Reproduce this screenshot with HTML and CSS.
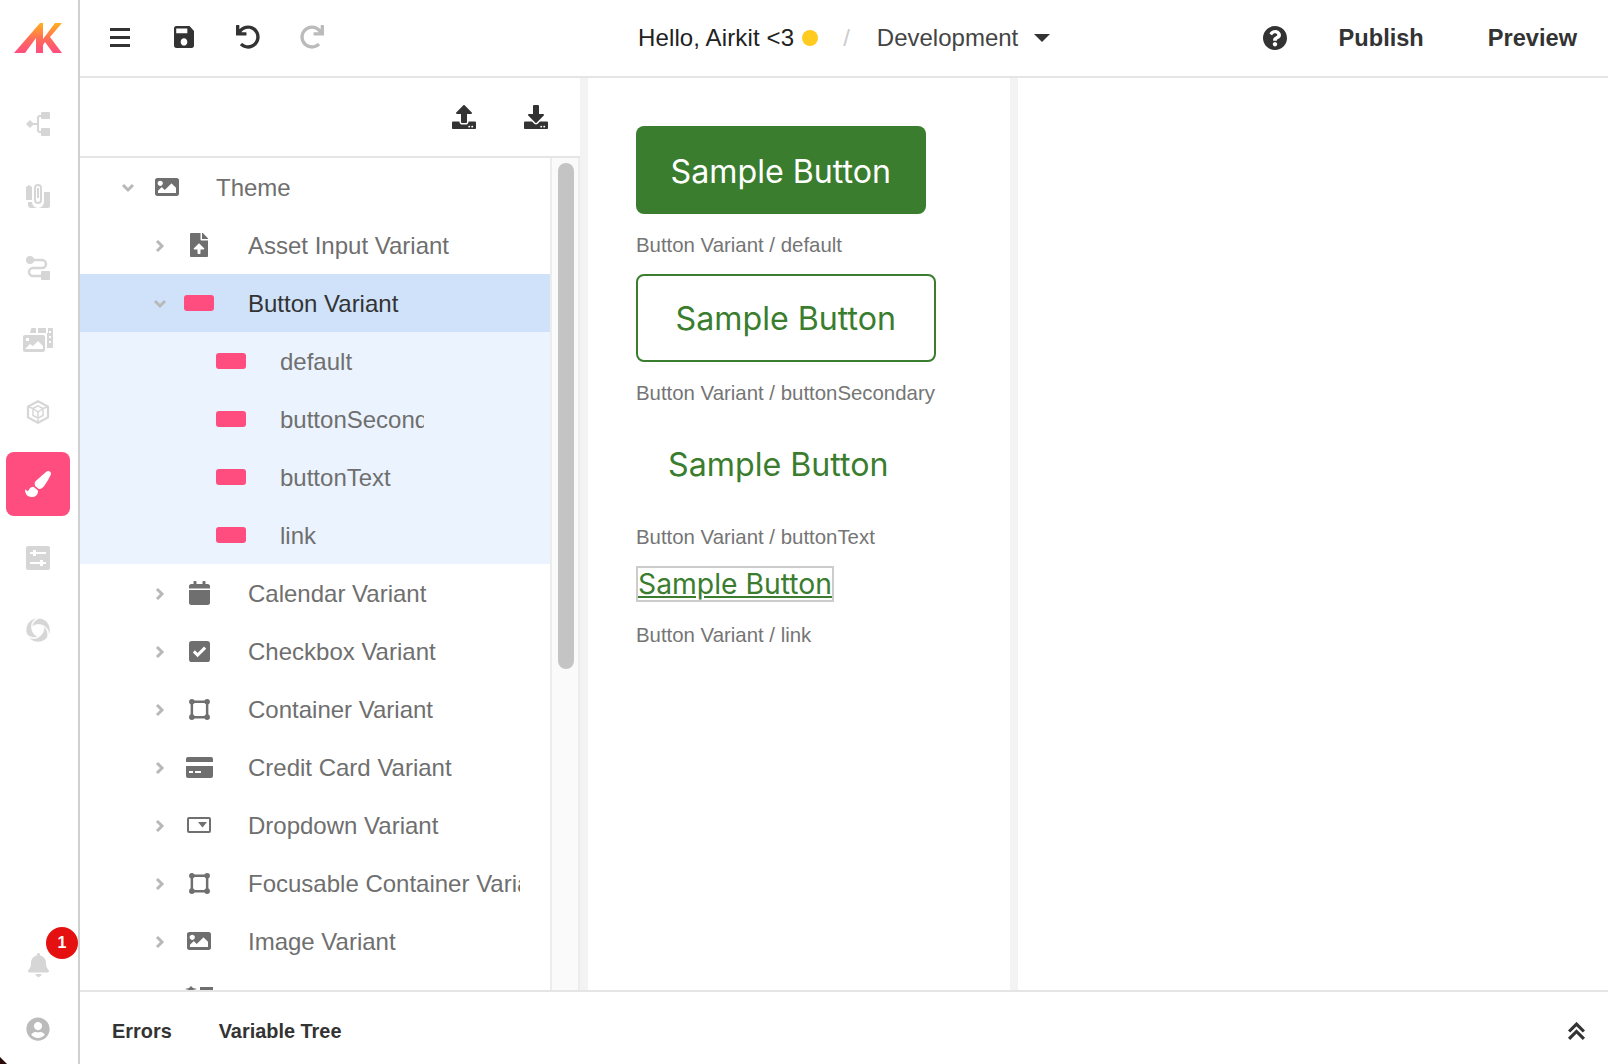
FILE: index.html
```html
<!DOCTYPE html>
<html>
  <head>
    <title>Airkit Studio</title>
    <link rel="stylesheet" href="styles.css">
  </head>
  <body>
    <svg class="defs" width="0" height="0">
      <defs>
        <linearGradient id="logo-fill" x1="0" y1="0" x2="0" y2="1">
          <stop offset="0" stop-color="#ffb11f" />
          <stop offset="0.55" stop-color="#ff6a5a" />
          <stop offset="1" stop-color="#ff4d80" />
        </linearGradient>
        <symbol id="i-image" viewBox="0 0 512 512"><path d="M464 448H48c-26.51 0-48-21.49-48-48V112c0-26.51 21.49-48 48-48h416c26.51 0 48 21.49 48 48v288c0 26.51-21.49 48-48 48zM112 120c-30.928 0-56 25.072-56 56s25.072 56 56 56 56-25.072 56-56-25.072-56-56-56zM64 384h384V272l-87.515-87.515c-4.686-4.686-12.284-4.686-16.971 0L208 320l-55.515-55.515c-4.686-4.686-12.284-4.686-16.971 0L64 336v48z" /></symbol>
        <symbol id="i-file" viewBox="0 0 384 512"><path d="M224 136V0H24C10.7 0 0 10.7 0 24v464c0 13.3 10.7 24 24 24h336c13.3 0 24-10.7 24-24V160H248c-13.2 0-24-10.8-24-24zm65.18 216.01H224v80c0 8.84-7.16 16-16 16h-32c-8.84 0-16-7.16-16-16v-80H94.82c-14.28 0-21.41-17.29-11.27-27.36l96.42-95.7c6.65-6.61 17.39-6.61 24.04 0l96.42 95.7c10.15 10.07 3.03 27.36-11.25 27.36zM377 105L279.1 7c-4.5-4.5-10.6-7-17-7H256v128h128v-6.1c0-6.3-2.5-12.4-7-16.9z" /></symbol>
        <symbol id="i-calendar" viewBox="0 0 448 512"><path d="M0 464c0 26.5 21.5 48 48 48h352c26.5 0 48-21.5 48-48V192H0v272zM400 64h-48V16c0-8.8-7.2-16-16-16h-32c-8.8 0-16 7.2-16 16v48H160V16c0-8.8-7.2-16-16-16h-32c-8.8 0-16 7.2-16 16v48H48C21.5 64 0 85.5 0 112v48h448v-48c0-26.5-21.5-48-48-48z" /></symbol>
        <symbol id="i-check" viewBox="0 0 22 22"><path fill-rule="evenodd" d="M3 0h16a3 3 0 0 1 3 3v16a3 3 0 0 1-3 3H3a3 3 0 0 1-3-3V3a3 3 0 0 1 3-3zM9 17l9-9-2.2-2.2L9 12.6 6.2 9.8 4 12z" /></symbol>
        <symbol id="i-container" viewBox="0 0 22 22"><path fill="none" stroke="currentColor" stroke-width="2.6" d="M3 3h16v16H3z" /><circle cx="3" cy="3" r="2.9" /><circle cx="19" cy="3" r="2.9" /><circle cx="3" cy="19" r="2.9" /><circle cx="19" cy="19" r="2.9" /></symbol>
        <symbol id="i-card" viewBox="0 0 27 21"><path fill-rule="evenodd" d="M2 0h23a2 2 0 0 1 2 2v3H0V2a2 2 0 0 1 2-2zM0 9h27v10a2 2 0 0 1-2 2H2a2 2 0 0 1-2-2zM3 14v2h4v-2zM9 14v2h6v-2z" /></symbol>
        <symbol id="i-dropdown" viewBox="0 0 24 16"><path fill="none" stroke="currentColor" stroke-width="2" d="M2 1h20a1 1 0 0 1 1 1v12a1 1 0 0 1-1 1H2a1 1 0 0 1-1-1V2a1 1 0 0 1 1-1z" /><path d="M11 5h9l-4.500 5.500z" /></symbol>
        <symbol id="i-list" viewBox="0 0 28 28"><path d="M0 4l4-1 2-2 2 2 4 1-4 1-2 2-2-2zM15 2h13v3H15z" /></symbol>
        <symbol id="i-undo" viewBox="0 0 512 512"><path d="M212.333 224.333H12c-6.627 0-12-5.373-12-12V12C0 5.373 5.373 0 12 0h48c6.627 0 12 5.373 12 12v78.112C117.773 39.279 184.26 7.47 258.175 8.007c136.906.994 246.448 111.623 246.157 248.532C504.041 393.258 393.12 504 256.333 504c-64.089 0-122.496-24.313-166.51-64.215-5.099-4.622-5.334-12.554-.467-17.42l33.967-33.967c4.474-4.474 11.662-4.717 16.401-.525C170.76 415.336 211.58 432 256.333 432c97.268 0 176-78.716 176-176 0-97.267-78.716-176-176-176-58.496 0-110.28 28.476-142.274 72.333h98.274c6.627 0 12 5.373 12 12v48c0 6.627-5.373 12-12 12z" /></symbol>
      </defs>
    </svg>

    <div class="app">
      <nav class="sidebar">
        <div class="logo">
          <svg width="48" height="30" viewBox="0 0 48 30">
            <path fill="url(#logo-fill)" d="M0 30L26 0h3v30h-7V15L11 30z" />
            <path fill="url(#logo-fill)" d="M29 16L41 0h7L36 14l12 16h-9L31 19l-2 3z" />
          </svg>
        </div>
        <ul class="nav-list">
          <li class="nav-item">
            <svg width="24" height="24" viewBox="0 0 24 24" fill="currentColor">
              <path d="M0 12l4-4 4 4-4 4z" />
              <rect x="15" y="0" width="9" height="7" rx="1" />
              <rect x="15" y="16" width="9" height="8" rx="1" />
              <path fill="none" stroke="currentColor" stroke-width="2" d="M7 12h6M16 4h-2a2 2 0 0 0-2 2v12a2 2 0 0 0 2 2h2" />
            </svg>
          </li>
          <li class="nav-item">
            <svg width="24" height="24" viewBox="0 0 24 24" fill="currentColor">
              <path d="M0 3l3-2 3 2v13H0zM2 18h4a6 6 0 0 0 12 0V8h6v14a2 2 0 0 1-2 2H5a3 3 0 0 1-3-3z" />
              <path fill="none" stroke="currentColor" stroke-width="2" d="M9 4a3 3 0 0 1 6 0v12a3 3 0 0 1-6 0zM12 4v10" />
            </svg>
          </li>
          <li class="nav-item">
            <svg width="24" height="24" viewBox="0 0 24 24" fill="currentColor">
              <circle cx="4" cy="4" r="4" />
              <rect x="15" y="15" width="9" height="9" rx="1" />
              <path fill="none" stroke="currentColor" stroke-width="2.500" d="M7 4h9a3.500 3.500 0 0 1 0 8H7a3.500 3.500 0 0 0 0 8h8" />
            </svg>
          </li>
          <li class="nav-item">
            <svg width="30" height="24" viewBox="0 0 30 24" fill="currentColor">
              <path d="M0 9a2 2 0 0 1 2-2h18a2 2 0 0 1 2 2v13a2 2 0 0 1-2 2H2a2 2 0 0 1-2-2z" />
              <path fill="#fff" d="M2 21l5-5 3 2 5-5 5 5v3zM3 10h3v3H3z" />
              <path d="M8 1a1 1 0 0 1 1-1h4v5H7zM15 0h8v5h-8zM25 0h4a1 1 0 0 1 1 1v18a1 1 0 0 1-1 1h-5V6a1 1 0 0 0-1-1h2z" />
              <path fill="#fff" d="M26 3h2v2h-2zM26 8h2v2h-2zM26 13h2v2h-2z" />
            </svg>
          </li>
          <li class="nav-item">
            <svg width="24" height="24" viewBox="0 0 24 24" fill="none" stroke="currentColor">
              <path stroke-width="2.200" d="M12 1.200l10 5.400v10.800l-10 5.400-10-5.400V6.600z" />
              <path stroke-width="1.500" d="M7 8.500l5-2.700 5 2.700v7l-5 2.700-5-2.700zM3 7l4 1.500M21 7l-4 1.500M12 23v-4.800" />
              <path stroke-width="1.500" d="M7 8.500l5 3.500 5-3.500M12 12v6" />
            </svg>
          </li>
          <li class="nav-item active">
            <svg width="26" height="26" viewBox="0 0 512 512" fill="currentColor">
              <path d="M167.02 309.34c-40.12 2.58-76.53 17.86-97.19 72.3-2.35 6.21-8 9.98-14.59 9.98-11.11 0-45.46-27.67-55.25-34.35C0 439.62 37.93 512 128 512c75.86 0 128-43.77 128-120.19 0-3.11-.65-6.08-.97-9.13l-88.01-73.34zM457.89 0c-15.16 0-29.37 6.71-40.21 16.45C213.27 199.05 192 203.34 192 257.09c0 13.7 3.25 26.76 8.73 38.7l63.82 53.18c7.21 1.8 14.64 3.03 22.39 3.03 62.11 0 98.11-45.47 211.16-256.46 7.38-14.35 13.9-29.85 13.9-45.99C512 20.64 486 0 457.89 0z" />
            </svg>
          </li>
          <li class="nav-item">
            <svg width="24" height="24" viewBox="0 0 24 24" fill="currentColor">
              <path fill-rule="evenodd" d="M2 0h20a2 2 0 0 1 2 2v20a2 2 0 0 1-2 2H2a2 2 0 0 1-2-2V2a2 2 0 0 1 2-2zM4 6v2h3v2h3V8h10V6H10V4H7v2zM4 16v2h10v2h3v-2h3v-2h-3v-2h-3v2z" />
            </svg>
          </li>
          <li class="nav-item">
            <svg width="24" height="24" viewBox="0 0 24 24" fill="currentColor" stroke="#fff" stroke-width="0.6">
              <path d="M14 0.200A12 12 0 0 1 23 17C23 11 19 7 13 6.500C10 6.300 7.500 7.500 6 9C6.500 5 9.500 1 14 0.200Z" />
              <path transform="rotate(120 12 12)" d="M14 0.200A12 12 0 0 1 23 17C23 11 19 7 13 6.500C10 6.300 7.500 7.500 6 9C6.500 5 9.500 1 14 0.200Z" />
              <path transform="rotate(240 12 12)" d="M14 0.200A12 12 0 0 1 23 17C23 11 19 7 13 6.500C10 6.300 7.500 7.500 6 9C6.500 5 9.500 1 14 0.200Z" />
            </svg>
          </li>
        </ul>
        <div class="nav-foot">
          <div class="nav-foot-item">
            <span class="badge">1</span>
            <svg class="bell" width="21" height="24" viewBox="0 0 448 512" fill="currentColor">
              <path d="M224 512c35.32 0 63.97-28.65 63.97-64H160.03c0 35.35 28.65 64 63.97 64zm215.39-149.71c-19.32-20.76-55.47-51.99-55.47-154.29 0-77.7-54.48-139.9-127.94-155.16V32c0-17.67-14.32-32-31.98-32s-31.98 14.33-31.98 32v20.84C118.56 68.1 64.08 130.3 64.08 208c0 102.3-36.15 133.53-55.47 154.29-6 6.45-8.66 14.16-8.61 21.71.11 16.4 12.98 32 32.1 32h383.8c19.12 0 32-15.6 32.1-32 .05-7.55-2.61-15.27-8.61-21.71z" />
            </svg>
          </div>
          <div class="nav-foot-item">
            <svg class="user" width="24" height="24" viewBox="0 0 496 512" fill="currentColor">
              <path d="M248 8C111 8 0 119 0 256s111 248 248 248 248-111 248-248S385 8 248 8zm0 96c48.6 0 88 39.4 88 88s-39.4 88-88 88-88-39.4-88-88 39.4-88 88-88zm0 344c-58.7 0-111.3-26.6-146.5-68.2 18.8-35.4 55.6-59.8 98.5-59.8 2.4 0 4.8.4 7.1 1.1 13 4.2 26.6 6.9 40.9 6.9 14.3 0 28-2.7 40.9-6.9 2.3-.7 4.7-1.1 7.1-1.1 42.9 0 79.7 24.4 98.5 59.8C359.3 421.4 306.7 448 248 448z" />
            </svg>
          </div>
        </div>
      </nav>

      <div class="main">
        <header class="topbar">
          <div class="tools">
            <svg class="tool" width="20" height="19" viewBox="0 0 20 19" fill="currentColor">
              <rect x="0" y="0" width="20" height="3" />
              <rect x="0" y="8" width="20" height="3" />
              <rect x="0" y="16" width="20" height="3" />
            </svg>
            <svg class="tool" width="20" height="22" viewBox="3 3 18 18" preserveAspectRatio="none" fill="currentColor">
              <path d="M17 3H5c-1.110 0-2 .9-2 2v14c0 1.100.89 2 2 2h14c1.100 0 2-.9 2-2V7l-4-4zm-5 16c-1.660 0-3-1.340-3-3s1.340-3 3-3 3 1.340 3 3-1.340 3-3 3zm3-10H5V5h10v4z" />
            </svg>
            <svg class="tool undo" width="24" height="24" fill="currentColor"><use href="#i-undo" /></svg>
            <svg class="tool redo" width="24" height="24" fill="currentColor"><use href="#i-undo" /></svg>
          </div>
          <div class="crumbs">
            <span class="app-name">Hello, Airkit &lt;3</span>
            <span class="dot"></span>
            <span class="slash">/</span>
            <span class="env">Development</span>
            <span class="caret"></span>
          </div>
          <div class="actions">
            <svg class="help" width="24" height="24" viewBox="8 8 496 496" fill="currentColor">
              <path d="M504 256c0 136.997-111.043 248-248 248S8 392.997 8 256C8 119.083 119.043 8 256 8s248 111.083 248 248zM262.655 90c-54.497 0-89.255 22.957-116.549 63.758-3.536 5.286-2.353 12.415 2.715 16.258l34.699 26.31c5.205 3.947 12.621 3.008 16.665-2.122 17.864-22.658 30.113-35.797 57.303-35.797 20.429 0 45.698 13.148 45.698 32.958 0 14.976-12.363 22.667-32.534 33.976C247.128 238.528 216 254.941 216 296v4c0 6.627 5.373 12 12 12h56c6.627 0 12-5.373 12-12v-1.333c0-28.462 83.186-29.647 83.186-106.667 0-58.002-60.165-102-116.531-102zM256 338c-25.365 0-46 20.635-46 46 0 25.364 20.635 46 46 46s46-20.636 46-46c0-25.365-20.635-46-46-46z" />
            </svg>
            <span class="action publish">Publish</span>
            <span class="action">Preview</span>
          </div>
        </header>

        <div class="workspace">
          <section class="tree-panel">
            <div class="tree-tools">
              <svg width="24" height="24" viewBox="0 0 512 512" fill="currentColor">
                <path d="M296 384h-80c-13.3 0-24-10.7-24-24V192h-87.7c-17.8 0-26.7-21.5-14.1-34.1L242.3 5.7c7.5-7.5 19.8-7.5 27.3 0l152.2 152.2c12.6 12.6 3.7 34.1-14.1 34.1H320v168c0 13.3-10.7 24-24 24zm216-8v112c0 13.3-10.7 24-24 24H24c-13.3 0-24-10.7-24-24V376c0-13.3 10.7-24 24-24h136v8c0 30.9 25.1 56 56 56h80c30.9 0 56-25.1 56-56v-8h136c13.3 0 24 10.7 24 24zm-124 88c0-11-9-20-20-20s-20 9-20 20 9 20 20 20 20-9 20-20zm64 0c0-11-9-20-20-20s-20 9-20 20 9 20 20 20 20-9 20-20z" />
              </svg>
              <svg width="24" height="24" viewBox="0 0 512 512" fill="currentColor">
                <path d="M216 0h80c13.3 0 24 10.7 24 24v168h87.7c17.8 0 26.7 21.5 14.1 34.1L269.7 378.3c-7.5 7.5-19.8 7.5-27.3 0L90.1 226.1c-12.6-12.6-3.7-34.1 14.1-34.1H192V24c0-13.3 10.7-24 24-24zm296 376v112c0 13.3-10.7 24-24 24H24c-13.3 0-24-10.7-24-24V376c0-13.3 10.7-24 24-24h146.7l49 49c20.1 20.1 52.5 20.1 72.6 0l49-49H488c13.3 0 24 10.7 24 24zm-124 88c0-11-9-20-20-20s-20 9-20 20 9 20 20 20 20-9 20-20zm64 0c0-11-9-20-20-20s-20 9-20 20 9 20 20 20 20-9 20-20z" />
              </svg>
            </div>
            <div class="tree-body">
              <div class="tree">
                <div class="row level-0">
                  <svg class="chev" viewBox="0 0 18 18"><path d="M4 6l5 5 5-5" /></svg>
                  <span class="row-icon"><svg width="24" height="24"><use href="#i-image" /></svg></span>
                  <span class="row-label">Theme</span>
                </div>
                <div class="row level-1">
                  <svg class="chev" viewBox="0 0 18 18"><path d="M6 4l5 5-5 5" /></svg>
                  <span class="row-icon"><svg width="18" height="24"><use href="#i-file" /></svg></span>
                  <span class="row-label">Asset Input Variant</span>
                </div>
                <div class="row level-1 selected">
                  <svg class="chev" viewBox="0 0 18 18"><path d="M4 6l5 5 5-5" /></svg>
                  <span class="row-icon"><span class="chip"></span></span>
                  <span class="row-label">Button Variant</span>
                </div>
                <div class="row level-2 open">
                  <span class="chev"></span>
                  <span class="row-icon"><span class="chip"></span></span>
                  <span class="row-label">default</span>
                </div>
                <div class="row level-2 open">
                  <span class="chev"></span>
                  <span class="row-icon"><span class="chip"></span></span>
                  <span class="row-label">buttonSecondary</span>
                </div>
                <div class="row level-2 open">
                  <span class="chev"></span>
                  <span class="row-icon"><span class="chip"></span></span>
                  <span class="row-label">buttonText</span>
                </div>
                <div class="row level-2 open">
                  <span class="chev"></span>
                  <span class="row-icon"><span class="chip"></span></span>
                  <span class="row-label">link</span>
                </div>
                <div class="row level-1">
                  <svg class="chev" viewBox="0 0 18 18"><path d="M6 4l5 5-5 5" /></svg>
                  <span class="row-icon"><svg width="21" height="24"><use href="#i-calendar" /></svg></span>
                  <span class="row-label">Calendar Variant</span>
                </div>
                <div class="row level-1">
                  <svg class="chev" viewBox="0 0 18 18"><path d="M6 4l5 5-5 5" /></svg>
                  <span class="row-icon"><svg width="21" height="21"><use href="#i-check" /></svg></span>
                  <span class="row-label">Checkbox Variant</span>
                </div>
                <div class="row level-1">
                  <svg class="chev" viewBox="0 0 18 18"><path d="M6 4l5 5-5 5" /></svg>
                  <span class="row-icon"><svg width="21" height="21"><use href="#i-container" /></svg></span>
                  <span class="row-label">Container Variant</span>
                </div>
                <div class="row level-1">
                  <svg class="chev" viewBox="0 0 18 18"><path d="M6 4l5 5-5 5" /></svg>
                  <span class="row-icon"><svg width="27" height="21"><use href="#i-card" /></svg></span>
                  <span class="row-label">Credit Card Variant</span>
                </div>
                <div class="row level-1">
                  <svg class="chev" viewBox="0 0 18 18"><path d="M6 4l5 5-5 5" /></svg>
                  <span class="row-icon"><svg width="24" height="16"><use href="#i-dropdown" /></svg></span>
                  <span class="row-label">Dropdown Variant</span>
                </div>
                <div class="row level-1">
                  <svg class="chev" viewBox="0 0 18 18"><path d="M6 4l5 5-5 5" /></svg>
                  <span class="row-icon"><svg width="21" height="21"><use href="#i-container" /></svg></span>
                  <span class="row-label">Focusable Container Variant</span>
                </div>
                <div class="row level-1">
                  <svg class="chev" viewBox="0 0 18 18"><path d="M6 4l5 5-5 5" /></svg>
                  <span class="row-icon"><svg width="24" height="24"><use href="#i-image" /></svg></span>
                  <span class="row-label">Image Variant</span>
                </div>
                <div class="row level-1">
                  <span class="chev"></span>
                  <span class="row-icon"><svg width="28" height="28"><use href="#i-list" /></svg></span>
                </div>
              </div>
              <div class="scroll-track"><div class="scroll-thumb"></div></div>
            </div>
          </section>

          <section class="preview">
            <div class="sample sample-default">Sample Button</div>
            <p class="caption">Button Variant / default</p>
            <div class="sample sample-secondary">Sample Button</div>
            <p class="caption">Button Variant / buttonSecondary</p>
            <div class="sample sample-text">Sample Button</div>
            <p class="caption">Button Variant / buttonText</p>
            <div class="sample sample-link"><span>Sample Button</span></div>
            <p class="caption caption-last">Button Variant / link</p>
          </section>

          <section class="blank"></section>
        </div>

        <footer class="bottombar">
          <span class="tab">Errors</span>
          <span class="tab">Variable Tree</span>
          <svg class="collapse" width="19" height="19" viewBox="0 0 18 18" fill="none" stroke="currentColor" stroke-width="3">
            <path d="M2 9l7-7 7 7M2 16l7-7 7 7" />
          </svg>
        </footer>
      </div>
    </div>
    <div class="window-corner"></div>
  </body>
</html>
```

FILE: styles.css
```css
* {
  box-sizing: border-box;
}

html,
body {
  height: 100%;
}

body {
  margin: 0;
  overflow: hidden;
  font-family: "Liberation Sans", Arial, sans-serif;
  color: #333;
  background-color: #fff;
}

.defs {
  display: block;
  height: 0;
}

.app {
  display: flex;
  height: 1064px;
}

/* left rail */
.sidebar {
  flex: 0 0 80px;
  display: flex;
  flex-direction: column;
  border-right: 2px solid #d0d0d0;
}

.logo {
  height: 88px;
  padding: 23px 0 0 14px;
}

.logo svg,
.tool,
.help {
  display: block;
}

.nav-list {
  display: flex;
  flex-direction: column;
  gap: 8px;
  list-style: none;
  margin: 0;
  padding: 4px 0 0 6px;
}

.nav-item {
  display: flex;
  align-items: center;
  justify-content: center;
  height: 64px;
  width: 64px;
  border-radius: 8px;
  color: #d6d6d6;
}

.nav-item.active {
  margin-bottom: 2px;
  background-color: #ff4d80;
  color: #fff;
}

.nav-foot {
  margin-top: auto;
  padding-bottom: 3px;
}

.nav-foot-item {
  position: relative;
  display: flex;
  align-items: center;
  justify-content: center;
  height: 64px;
  width: 76px;
}

.bell {
  color: #d6d6d6;
}

.user {
  color: #bbb;
}

.badge {
  position: absolute;
  left: 46px;
  top: -6px;
  width: 32px;
  height: 32px;
  border-radius: 50%;
  background-color: #e51111;
  color: #fff;
  font-size: 16px;
  font-weight: bold;
  line-height: 32px;
  text-align: center;
}

.main {
  flex: 1;
  display: flex;
  flex-direction: column;
  min-width: 0;
}

/* top bar */
.topbar {
  flex: 0 0 78px;
  display: flex;
  align-items: center;
  border-bottom: 2px solid #e5e5e5;
}

.tools {
  display: flex;
  align-items: center;
  padding: 0 0 2px 30px;
  gap: 44px;
}

.undo {
  margin-left: -2px;
}

.redo {
  margin-left: -4px;
  transform: scaleX(-1);
  color: #bbb;
}

.crumbs {
  display: flex;
  align-items: center;
  margin-left: 314px;
  font-size: 24px;
}

.app-name {
  color: #222;
  letter-spacing: 0.13px;
}

.dot {
  width: 16px;
  height: 16px;
  margin-left: 8px;
  border-radius: 50%;
  background-color: #ffcb1f;
}

.slash {
  margin-left: 25px;
  color: #ccc;
}

.env {
  margin-left: 27px;
  color: #444;
}

.caret {
  margin-left: 16px;
  border-left: 8px solid transparent;
  border-right: 8px solid transparent;
  border-top: 8px solid #333;
}

.actions {
  display: flex;
  align-items: center;
  margin-left: auto;
  padding-right: 31px;
}

.help {
  margin-right: 52px;
}

.action {
  font-size: 23.6px;
  font-weight: bold;
  color: #333;
}

.publish {
  margin-right: 64px;
}

/* workspace columns */
.workspace {
  flex: 1;
  display: flex;
  min-height: 0;
}

.tree-panel {
  flex: 0 0 500px;
  display: flex;
  flex-direction: column;
  min-height: 0;
}

.tree-tools {
  flex: 0 0 80px;
  display: flex;
  justify-content: flex-end;
  align-items: flex-start;
  gap: 48px;
  padding: 27px 32px 0 0;
  border-bottom: 2px solid #e5e5e5;
}

.tree-body {
  flex: 1;
  display: flex;
  min-height: 0;
}

.tree {
  flex: 0 0 470px;
  overflow: hidden;
}

.row {
  display: flex;
  align-items: center;
  height: 58px;
  padding-top: 2px;
  font-size: 24px;
  color: #6f6f6f;
}

.row.level-0 {
  padding-left: 39px;
}

.row.level-1 {
  padding-left: 71px;
}

.row.level-2 {
  padding-left: 103px;
}

.row.selected {
  background-color: #cfe2f9;
  color: #333;
}

.row.open {
  background-color: #ebf3fe;
}

.chev {
  flex: 0 0 18px;
  height: 18px;
  margin-right: 15px;
  fill: none;
  stroke: #b8b8b8;
  stroke-width: 3;
}

.row-icon {
  flex: 0 0 30px;
  display: flex;
  align-items: center;
  justify-content: center;
  margin: -2px 34px 0 0;
  color: #6f6f6f;
  fill: currentColor;
}

.row-label {
  width: 272px;
  overflow: hidden;
  white-space: nowrap;
}

.level-2 .row-label {
  width: 144px;
}

.chip {
  width: 30px;
  height: 16px;
  border-radius: 3px;
  background-color: #ff4d80;
}

.scroll-track {
  flex: 0 0 30px;
  padding: 5px 4px 0 6px;
  background-color: #fafafa;
  border-left: 2px solid #ececec;
  border-right: 2px solid #ececec;
}

.scroll-thumb {
  width: 16px;
  height: 506px;
  border-radius: 8px;
  background-color: #c4c4c4;
}

/* preview column */
.preview {
  flex: 0 0 438px;
  padding: 48px 0 0 48px;
  border-left: 8px solid #f3f3f3;
  border-right: 8px solid #f3f3f3;
  font-family: Inter, "Liberation Sans", sans-serif;
}

.sample {
  width: fit-content;
  font-size: 32.2px;
  color: #3a7d2e;
  line-height: 40px;
}

.sample-default {
  padding: 26px 34.5px 22px;
  border-radius: 8px;
  background-color: #3a7d2e;
  color: #fff;
}

.sample-secondary {
  padding: 23px 37.5px 21px;
  border: 2px solid #3a7d2e;
  border-radius: 8px;
}

.sample-text {
  padding: 23px 32px 21px;
}

.sample-link {
  padding: 0;
  height: 36px;
  border: 2px solid #ccc;
  font-size: 28.3px;
  line-height: 33px;
  text-decoration: underline;
}

.caption {
  margin: 19px 0 17px;
  font-family: "Liberation Sans", Arial, sans-serif;
  font-size: 20.4px;
  line-height: 24px;
  color: #757575;
}

.caption-last {
  margin-top: 21px;
}

.blank {
  flex: 1;
}

/* bottom bar */
.bottombar {
  flex: 0 0 74px;
  display: flex;
  align-items: center;
  padding: 6px 22px 0 32px;
  gap: 47px;
  border-top: 2px solid #e5e5e5;
}

.tab {
  font-size: 19.9px;
  font-weight: bold;
  color: #333;
}

.collapse {
  margin-left: auto;
  color: #333;
}

.window-corner {
  position: absolute;
  left: 0;
  bottom: 0;
  width: 7px;
  height: 7px;
  background-color: #2a0a0a;
  clip-path: polygon(0 0, 100% 100%, 0 100%);
}
```
